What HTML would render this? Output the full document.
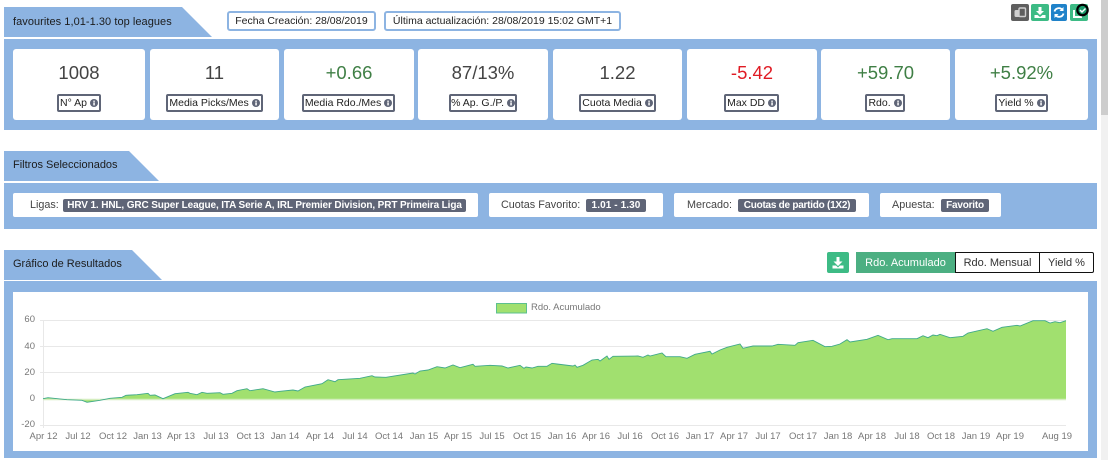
<!DOCTYPE html>
<html lang="es"><head><meta charset="utf-8"><title>favourites</title>
<style>
html,body{margin:0;padding:0;background:#fff}
body{width:1108px;height:460px;position:relative;overflow:hidden;font-family:"Liberation Sans",sans-serif;color:#222}
.a{position:absolute;box-sizing:border-box;white-space:nowrap}
.blue{background:#8db4e2}
.tab{font-size:11px;line-height:30px;padding-left:9px;height:30px;left:4px;color:#1c1c1c}
.card{background:#fff;border-radius:3px;top:49px;height:71px}
.val{left:0;right:0;top:13px;text-align:center;font-size:18.5px;line-height:22px;color:#444;position:absolute}
.g{color:#3f7f45}.r{color:#e01b24}
.lab{box-sizing:border-box;top:45px;height:18px;border:2px solid #5f6577;border-radius:2px;font-size:10.5px;line-height:14px;text-align:center;background:#fff;color:#222;position:absolute;white-space:nowrap}
.lab svg{vertical-align:-1px}
.fc{background:#fff;border-radius:2px;top:193px;height:24px;font-size:10.8px;line-height:24px;color:#444}
.bd{background:#5f6577;color:#fff;font-weight:bold;font-size:10px;line-height:13px;height:13px;top:199px;text-align:center;border-radius:2px}
.date{top:11px;height:20px;border:2px solid #8db4e2;border-radius:3px;font-size:10.5px;line-height:16px;text-align:center;background:#fff;color:#222}
.btn{border-radius:2px}
.seg{top:252px;height:21px;font-size:11px;line-height:20px;text-align:center;border:1px solid #111;background:#fff;color:#333}
</style></head><body>

<div class="a" style="left:1101px;top:0;width:7px;height:115px;background:#cdcdcd"></div>
<div class="a" style="left:1101px;top:115px;width:7px;height:345px;background:#f1f1f1"></div>

<svg class="a" style="left:4px;top:7px" width="208" height="30"><polygon points="0,0 178,0 208,30 0,30" fill="#8db4e2"/></svg>
<div class="a tab" style="top:7px;letter-spacing:.05px">favourites 1,01-1.30 top leagues</div>
<div class="a date" style="left:227px;width:149px">Fecha Creación: 28/08/2019</div>
<div class="a date" style="left:384px;width:237px">Última actualización: 28/08/2019 15:02 GMT+1</div>

<div class="a btn" style="left:1011px;top:4px;width:18px;height:17px;background:#5f5f5f"><svg width="18" height="17"><rect x="3.500" y="6" width="6" height="7" rx="1.500" fill="#cfcfcf"/><rect x="8" y="4" width="6.500" height="8.500" rx="1" fill="#5f5f5f" stroke="#cfcfcf" stroke-width="1.400"/></svg></div>
<div class="a btn" style="left:1031px;top:4px;width:18px;height:17px;background:#3dbb85"><svg width="18" height="17"><path d="M7.500 3h3v4h2.500L9 11 5 7h2.500zM3.500 11h3l2.500 2 2.500-2h3v3h-11z" fill="#fff"/></svg></div>
<div class="a btn" style="left:1051px;top:4px;width:16px;height:17px;background:#1f82c9"><svg width="16" height="17"><path d="M3.500 7.500a4.500 4.500 0 0 1 8-1.500M12.500 9.500a4.500 4.500 0 0 1-8 1.500" fill="none" stroke="#fff" stroke-width="1.800"/><path d="M12.500 3v4h-4zM3.500 14v-4h4z" fill="#fff"/></svg></div>
<div class="a btn" style="left:1070px;top:4px;width:18px;height:17px;background:#3dbb85"><svg width="18" height="17"><path d="M4 6v7h8" fill="none" stroke="#fff" stroke-width="2"/></svg></div>
<svg class="a" style="left:1075px;top:3px" width="15" height="14"><circle cx="7.500" cy="7" r="5.200" fill="#1a9c6c" stroke="#000" stroke-width="2.200"/><path d="M5 7l2 2 3.500-3.500" fill="none" stroke="#fff" stroke-width="1.500"/></svg>

<div class="a blue" style="left:4px;top:39px;width:1093px;height:91px"></div>

<svg width="0" height="0" style="position:absolute"><defs><g id="inf"><circle cx="4" cy="4" r="4" fill="#5f6577"/><rect x="3.300" y="3.400" width="1.500" height="3" fill="#fff"/><rect x="3.300" y="1.600" width="1.500" height="1.300" fill="#fff"/></g></defs></svg>

<div class="a card" style="left:13px;width:132px"><div class="val">1008</div><div class="lab" style="left:44px;width:44px">N° Ap <svg width="8" height="8"><use href="#inf"/></svg></div></div>
<div class="a card" style="left:150px;width:129px"><div class="val">11</div><div class="lab" style="left:16px;width:97px">Media Picks/Mes <svg width="8" height="8"><use href="#inf"/></svg></div></div>
<div class="a card" style="left:284px;width:130px"><div class="val g">+0.66</div><div class="lab" style="left:18px;width:93px">Media Rdo./Mes <svg width="8" height="8"><use href="#inf"/></svg></div></div>
<div class="a card" style="left:418px;width:130px"><div class="val">87/13%</div><div class="lab" style="left:31px;width:68px">% Ap. G./P. <svg width="8" height="8"><use href="#inf"/></svg></div></div>
<div class="a card" style="left:553px;width:129px"><div class="val">1.22</div><div class="lab" style="left:26px;width:77px">Cuota Media <svg width="8" height="8"><use href="#inf"/></svg></div></div>
<div class="a card" style="left:687px;width:130px"><div class="val r">-5.42</div><div class="lab" style="left:37px;width:55px">Max DD <svg width="8" height="8"><use href="#inf"/></svg></div></div>
<div class="a card" style="left:821px;width:129px"><div class="val g">+59.70</div><div class="lab" style="left:44px;width:40px">Rdo. <svg width="8" height="8"><use href="#inf"/></svg></div></div>
<div class="a card" style="left:955px;width:133px"><div class="val g">+5.92%</div><div class="lab" style="left:40px;width:53px">Yield % <svg width="8" height="8"><use href="#inf"/></svg></div></div>

<svg class="a" style="left:4px;top:151px" width="155" height="30"><polygon points="0,0 125,0 155,30 0,30" fill="#8db4e2"/></svg>
<div class="a tab" style="top:151px;line-height:28px">Filtros Seleccionados</div>
<div class="a blue" style="left:4px;top:183px;width:1093px;height:46px"></div>

<div class="a fc" style="left:13px;width:465px;padding-left:17px">Ligas:</div>
<div class="a bd" style="left:63px;width:403px;letter-spacing:-.12px">HRV 1. HNL, GRC Super League, ITA Serie A, IRL Premier Division, PRT Primeira Liga</div>
<div class="a fc" style="left:489px;width:174px;padding-left:12px">Cuotas Favorito:</div>
<div class="a bd" style="left:586px;width:60px;letter-spacing:.1px">1.01 - 1.30</div>
<div class="a fc" style="left:674px;width:195px;padding-left:13px">Mercado:</div>
<div class="a bd" style="left:738px;width:118px;letter-spacing:-.25px">Cuotas de partido (1X2)</div>
<div class="a fc" style="left:880px;width:121px;padding-left:12px">Apuesta:</div>
<div class="a bd" style="left:941px;width:48px;letter-spacing:-.2px">Favorito</div>

<svg class="a" style="left:4px;top:250px" width="158" height="30"><polygon points="0,0 128,0 158,30 0,30" fill="#8db4e2"/></svg>
<div class="a tab" style="top:250px;line-height:28px">Gráfico de Resultados</div>

<div class="a btn" style="left:827px;top:252px;width:22px;height:21px;background:#3dbb85"><svg width="22" height="21"><path d="M9.500 5h3v4.500h3L11 14 6.500 9.500h3zM5.500 13.500h3.500l2 2 2-2h3.500v3h-11z" fill="#fff"/></svg></div>
<div class="a seg" style="left:856px;width:99px;background:#4caf82;border-color:#4caf82;color:#fff">Rdo. Acumulado</div>
<div class="a seg" style="left:955px;width:85px;border-left:1px solid #111">Rdo. Mensual</div>
<div class="a seg" style="left:1039px;width:55px;border-radius:0 2px 2px 0">Yield %</div>

<div class="a blue" style="left:4px;top:281px;width:1093px;height:177px"></div>
<div class="a" style="left:13px;top:292px;width:1075px;height:159px;background:#fff"></div>

<svg class="a" style="left:0;top:0" width="1108" height="460" font-family="Liberation Sans, sans-serif" font-size="10" fill="#777">
<g stroke="#e8e8e8" stroke-width="1" fill="none">
<path d="M40 320.500H1066M40 346.500H1066M40 372.500H1066M40 425.500H1066M43.500 320V428"/>
</g>
<path d="M43 399L43 398.700 48 397.700 67 399.700 82 400.300 87 402.300 100 400.300 110 398.300 122 397.300 126 395.300 137 394.700 148 393.300 150 395.300 155 395 163 398.700 175 393.700 188 392.300 190 393.300 197 394.700 202 392.300 207 393.300 220 392.700 223 394.300 232 393.300 237 390.700 247 388.700 250 390.700 263 388.700 275 392 280 391.300 293 390 298 391 305 387 322 383.700 328 379.700 335 381.700 338 379.700 360 378.300 372 375.700 375 377 386 377.300 413 373 415 374 420 371 428 370 437 366.700 441 367.300 445 368 453 365 460 367.700 473 364.300 475 366.300 490 365.300 502 366 508 368 520 365.300 524 368.300 526 367 532 368 538 366.300 547 366.300 552 363.300 557 364 573 366 575 365 577 367.300 583 365.300 592 360 598 359.300 600 361 607 356 609 359.300 613 356.300 638 356 643 357.300 648 355 650 356 662 353 666 356.700 680 356.700 687 358.300 695 354.300 710 351.300 712 354 720 350 727 347.300 740 344 743 348.300 753 346 772 346 778 344.300 795 345.300 798 342.700 813 340.300 825 346.700 832 346.300 840 344 847 339.700 850 342 867 339.300 878 335.300 888 339.700 892 338.700 917 338.700 923 335.700 928 337.700 933 335 937 335.700 940 334.300 950 337.700 963 336.300 968 333 987 328.700 993 331.300 1002 327.300 1017 325.300 1020 326 1033 320.700 1045 320.700 1050 323 1055 321.700 1060 322.700 1066 320.700 L1066 399Z" fill="#a1e06f"/>
<path d="M43 399.500H1066" stroke="#d5eebf" stroke-width="1.500"/>
<path d="M43 398.700 48 397.700 67 399.700 82 400.300 87 402.300 100 400.300 110 398.300 122 397.300 126 395.300 137 394.700 148 393.300 150 395.300 155 395 163 398.700 175 393.700 188 392.300 190 393.300 197 394.700 202 392.300 207 393.300 220 392.700 223 394.300 232 393.300 237 390.700 247 388.700 250 390.700 263 388.700 275 392 280 391.300 293 390 298 391 305 387 322 383.700 328 379.700 335 381.700 338 379.700 360 378.300 372 375.700 375 377 386 377.300 413 373 415 374 420 371 428 370 437 366.700 441 367.300 445 368 453 365 460 367.700 473 364.300 475 366.300 490 365.300 502 366 508 368 520 365.300 524 368.300 526 367 532 368 538 366.300 547 366.300 552 363.300 557 364 573 366 575 365 577 367.300 583 365.300 592 360 598 359.300 600 361 607 356 609 359.300 613 356.300 638 356 643 357.300 648 355 650 356 662 353 666 356.700 680 356.700 687 358.300 695 354.300 710 351.300 712 354 720 350 727 347.300 740 344 743 348.300 753 346 772 346 778 344.300 795 345.300 798 342.700 813 340.300 825 346.700 832 346.300 840 344 847 339.700 850 342 867 339.300 878 335.300 888 339.700 892 338.700 917 338.700 923 335.700 928 337.700 933 335 937 335.700 940 334.300 950 337.700 963 336.300 968 333 987 328.700 993 331.300 1002 327.300 1017 325.300 1020 326 1033 320.700 1045 320.700 1050 323 1055 321.700 1060 322.700 1066 320.700" fill="none" stroke="#3fa98a" stroke-width=".9"/>
<rect x="496.500" y="303.500" width="30" height="9.500" fill="#a1e06f" stroke="#5cc08f"/>
<text x="531" y="310" font-size="9.500">Rdo. Acumulado</text>
<g text-anchor="end" font-size="9.500">
<text x="35" y="322">60</text><text x="35" y="349">40</text><text x="35" y="375">20</text><text x="35" y="401">0</text><text x="35" y="427">-20</text>
</g>
<g text-anchor="middle" font-size="9.500">
<text x="43.500" y="439">Apr 12</text><text x="78" y="439">Jul 12</text><text x="113" y="439">Oct 12</text><text x="147.500" y="439">Jan 13</text><text x="181" y="439">Apr 13</text><text x="216" y="439">Jul 13</text><text x="250.500" y="439">Oct 13</text><text x="285" y="439">Jan 14</text><text x="320" y="439">Apr 14</text><text x="355" y="439">Jul 14</text><text x="389" y="439">Oct 14</text><text x="424" y="439">Jan 15</text><text x="458" y="439">Apr 15</text><text x="492" y="439">Jul 15</text><text x="527" y="439">Oct 15</text><text x="562" y="439">Jan 16</text><text x="596" y="439">Apr 16</text><text x="630" y="439">Jul 16</text><text x="665" y="439">Oct 16</text><text x="700" y="439">Jan 17</text><text x="734" y="439">Apr 17</text><text x="768" y="439">Jul 17</text><text x="803" y="439">Oct 17</text><text x="838" y="439">Jan 18</text><text x="872" y="439">Apr 18</text><text x="907" y="439">Jul 18</text><text x="941" y="439">Oct 18</text><text x="976" y="439">Jan 19</text><text x="1010" y="439">Apr 19</text><text x="1057" y="439">Aug 19</text>
</g>
</svg>
</body></html>
